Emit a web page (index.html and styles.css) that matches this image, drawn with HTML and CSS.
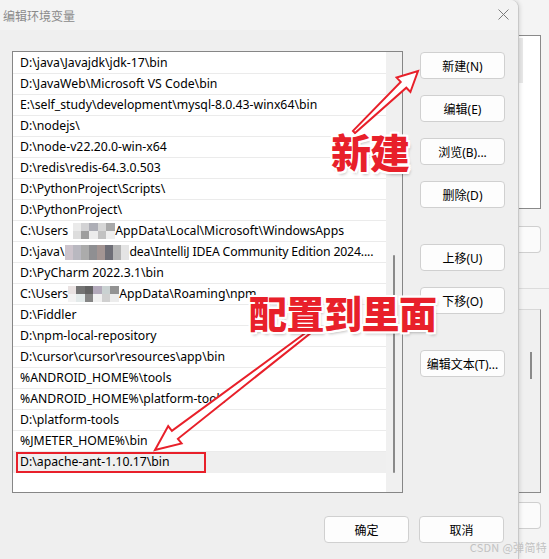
FILE: index.html
```html
<!DOCTYPE html>
<html lang="zh-CN">
<head>
<meta charset="utf-8">
<title>编辑环境变量</title>
<link rel="stylesheet" href="styles.css">
</head>
<body>
<div class="desk">
  <div class="dialog">
    <div class="titlebar">
      <span class="title">编辑环境变量</span>
      <svg class="close" width="11" height="11" viewBox="0 0 11 11"><path d="M0.5 0.5 L10.5 10.5 M10.5 0.5 L0.5 10.5" stroke="#7a7a7a" stroke-width="1" fill="none"/></svg>
    </div>
    <div class="body">
      <div class="list">
        <div class="rows">
          <div class="row">D:\java\Javajdk\jdk-17\bin</div>
          <div class="row">D:\JavaWeb\Microsoft VS Code\bin</div>
          <div class="row">E:\self_study\development\mysql-8.0.43-winx64\bin</div>
          <div class="row">D:\nodejs\</div>
          <div class="row">D:\node-v22.20.0-win-x64</div>
          <div class="row">D:\redis\redis-64.3.0.503</div>
          <div class="row">D:\PythonProject\Scripts\</div>
          <div class="row">D:\PythonProject\</div>
          <div class="row">C:\Users<svg class="mosaic m-a" width="42" height="16" viewBox="0 0 42 16"><rect x="0" y="0" width="8" height="8" fill="#eaeaea"/><rect x="8" y="0" width="8" height="8" fill="#d2d2d4"/><rect x="16" y="0" width="9" height="8" fill="#adaeb6"/><rect x="25" y="0" width="8" height="8" fill="#d6d6d6"/><rect x="33" y="0" width="9" height="8" fill="#a9a9a9"/><rect x="0" y="8" width="8" height="8" fill="#dddddd"/><rect x="8" y="8" width="8" height="8" fill="#9e9e9e"/><rect x="16" y="8" width="9" height="8" fill="#ececec"/><rect x="25" y="8" width="8" height="8" fill="#c2c2c2"/><rect x="33" y="8" width="9" height="8" fill="#efefef"/></svg>AppData\Local\Microsoft\WindowsApps</div>
          <div class="row">D:\java\<svg class="mosaic m-b" width="64" height="15" viewBox="0 0 64 15"><rect x="0" y="0" width="8" height="15" fill="#cdc4cc"/><rect x="8" y="0" width="8" height="15" fill="#b9b8c0"/><rect x="16" y="0" width="8" height="15" fill="#ababab"/><rect x="24" y="0" width="8" height="15" fill="#8f8f92"/><rect x="32" y="0" width="8" height="15" fill="#a39593"/><rect x="40" y="0" width="8" height="15" fill="#6f6f77"/><rect x="48" y="0" width="8" height="15" fill="#b4b4b4"/><rect x="56" y="0" width="8" height="15" fill="#e4e4e4"/></svg><span class="tight">dea\IntelliJ IDEA Community Edition 2024....</span></div>
          <div class="row">D:\PyCharm 2022.3.1\bin</div>
          <div class="row">C:\Users<svg class="mosaic m-c" width="51" height="16" viewBox="0 0 51 16"><rect x="0" y="0" width="8" height="8" fill="#e9e2e2"/><rect x="8" y="0" width="9" height="8" fill="#747474"/><rect x="17" y="0" width="8" height="8" fill="#636363"/><rect x="25" y="0" width="9" height="8" fill="#b3aabb"/><rect x="34" y="0" width="8" height="8" fill="#cad2d2"/><rect x="42" y="0" width="9" height="8" fill="#939393"/><rect x="0" y="8" width="8" height="8" fill="#f3f3f3"/><rect x="8" y="8" width="9" height="8" fill="#e3eaea"/><rect x="17" y="8" width="8" height="8" fill="#858585"/><rect x="25" y="8" width="9" height="8" fill="#f1f1f1"/><rect x="34" y="8" width="8" height="8" fill="#d0d0d0"/><rect x="42" y="8" width="9" height="8" fill="#ececec"/></svg>AppData\Roaming\npm</div>
          <div class="row">D:\Fiddler</div>
          <div class="row">D:\npm-local-repository</div>
          <div class="row">D:\cursor\cursor\resources\app\bin</div>
          <div class="row">%ANDROID_HOME%\tools</div>
          <div class="row">%ANDROID_HOME%\platform-tools</div>
          <div class="row">D:\platform-tools</div>
          <div class="row">%JMETER_HOME%\bin</div>
          <div class="row selected">D:\apache-ant-1.10.17\bin</div>
        </div>
        <div class="scroll"><div class="thumb"></div></div>
      </div>
      <div class="buttons">
        <div class="btn">新建(N)</div>
        <div class="btn gap-s">编辑(E)</div>
        <div class="btn gap-s">浏览(B)...</div>
        <div class="btn gap-s">删除(D)</div>
        <div class="btn gap-l">上移(U)</div>
        <div class="btn gap-s">下移(O)</div>
        <div class="btn gap-l">编辑文本(T)...</div>
      </div>
    </div>
    <div class="footer">
      <div class="btn">确定</div>
      <div class="btn">取消</div>
    </div>
  </div>
  <div class="backwin">
    <div class="bw-panel"><div class="bw-strip"></div></div>
    <div class="bw-btn"></div>
    <div class="bw-rule"></div>
    <div class="bw-panel2"><div class="bw-thumb"></div></div>
    <div class="bw-btn bw-btn2"></div>
  </div>
</div>

<svg class="arrows" width="549" height="559" viewBox="0 0 549 559">
  <polygon points="353.0,130.9 400.7,81.9 396.6,77.6 418,71 410.4,92.0 406.3,87.7 355.0,133.1" fill="#ffffff" stroke="#e8202a" stroke-width="2" stroke-linejoin="miter"/>
  <polygon points="311.1,328.8 171.9,430.8 168.2,426.1 155,450 181.6,443.5 177.9,438.8 312.9,331.2" fill="#ffffff" stroke="#e8202a" stroke-width="2" stroke-linejoin="miter"/>
</svg>
<div class="label label-new">新建</div>
<div class="label label-here">配置到里面</div>
<div class="mark-box"></div>
<div class="watermark">CSDN @弹简特</div>
</body>
</html>
```

FILE: styles.css
```css
* { box-sizing: border-box; }
html, body { margin: 0; padding: 0; }
body {
  width: 549px;
  height: 559px;
  overflow: hidden;
  position: relative;
  background: #f3f3f3;
  font-family: "Noto Sans", "Noto Sans CJK SC", sans-serif;
  color: #000;
}
.desk { display: flex; height: 559px; }

.dialog {
  flex: none;
  width: 519px;
  height: 559px;
  background: #efefef;
  border-right: 1px solid #c8c8c8;
  border-top-right-radius: 8px;
  box-shadow: 1px 0 4px rgba(0,0,0,0.12);
  display: flex;
  flex-direction: column;
  position: relative;
  z-index: 1;
}
.titlebar {
  height: 30px;
  background: #f3f3f3;
  border-top-right-radius: 8px;
  display: flex;
  align-items: center;
  justify-content: space-between;
  padding: 0 9px 0 3px;
  font-family: "Noto Sans CJK SC", sans-serif;
  font-size: 12px;
  color: #8a8a8a;
}
.close { display: block; margin-top: -1px; }

.body { display: flex; padding: 21px 0 0 12px; }
.list {
  width: 391px;
  height: 442px;
  border: 1px solid #868686;
  background: #fff;
  display: flex;
}
.rows { width: 373px; padding-top: 1px; }
.row {
  height: 21px;
  border-bottom: 1px solid #ebebeb;
  padding-left: 7px;
  font-size: 12.25px;
  line-height: 20px;
  white-space: nowrap;
  overflow: hidden;
  display: flex;
  align-items: center;
}
.row.selected { background: #efefef; border-bottom-color: #efefef; }
.tight { letter-spacing: -0.15px; }
.mosaic { flex: none; display: block; }
.m-a { margin: 0 0 0 5px; }
.m-b { margin: 0 0 0 1px; }
.m-c { margin: 0 0 0 0; }

.scroll { width: 16px; background: #f0f0f0; }
.thumb {
  margin: 203px 0 0 7px;
  width: 2px;
  height: 218px;
  background: #8a8a8a;
  border-radius: 1px;
}

.buttons {
  margin-left: 17px;
  padding-top: 1px;
  display: flex;
  flex-direction: column;
}
.btn {
  width: 85px;
  height: 27px;
  border: 1px solid #d0d0d0;
  border-radius: 4px;
  background: #fdfdfd;
  font-family: "Noto Sans", "Noto Sans CJK SC", sans-serif;
  font-size: 12px;
  display: flex;
  align-items: center;
  justify-content: center;
  color: #000;
}
.gap-s { margin-top: 16px; }
.gap-l { margin-top: 36px; }

.footer {
  display: flex;
  justify-content: flex-end;
  gap: 10px;
  padding: 23px 14px 0 0;
}

/* background window peeking out on the right */
.backwin {
  flex: 1;
  background: #f4f4f4;
  padding-top: 35px;
}
.bw-panel {
  width: 22px;
  height: 174px;
  background: #fff;
  border: 1px solid #8a8a8a;
  border-left: none;
}
.bw-strip { width: 4px; height: 45px; margin-top: 2px; background: #e9e9e9; }
.bw-btn {
  width: 22px;
  height: 27px;
  margin-top: 17px;
  background: #fbfbfb;
  border: 1px solid #cfcfcf;
  border-left: none;
  border-radius: 0 4px 4px 0;
}
.bw-rule { height: 1px; margin-top: 35px; background: #dcdcdc; }
.bw-panel2 {
  width: 22px;
  height: 184px;
  margin-top: 20px;
  background: #f0f0f0;
  border: 1px solid #8a8a8a;
  border-left: none;
  border-top-color: #d8d8d8;
  padding-top: 42px;
}
.bw-thumb { width: 2px; height: 27px; margin-left: 11px; background: #8a8a8a; }
.bw-btn2 { margin-top: 9px; }

/* annotations layered on top */
.arrows { position: absolute; left: 0; top: 0; z-index: 5; }
.label {
  position: absolute;
  z-index: 6;
  font-family: "Noto Sans CJK SC", sans-serif;
  font-weight: 900;
  color: #e8202a;
  line-height: 1;
  white-space: nowrap;
  text-shadow:
    -2px 0 0 #fff, 2px 0 0 #fff, 0 -2px 0 #fff, 0 2px 0 #fff,
    -2px -2px 0 #fff, 2px 2px 0 #fff, -2px 2px 0 #fff, 2px -2px 0 #fff,
    2px 3px 3px rgba(0,0,0,0.25);
}
.label-new { left: 331px; top: 131px; font-size: 40px; letter-spacing: -1px; }
.label-here { left: 249px; top: 293px; font-size: 38px; letter-spacing: -0.5px; }
.mark-box {
  position: absolute;
  z-index: 6;
  left: 16px;
  top: 452px;
  width: 190px;
  height: 21px;
  border: 2px solid #e8202a;
}
.watermark {
  position: absolute;
  z-index: 7;
  right: 2px;
  bottom: 4px;
  font-family: "Noto Sans CJK SC", sans-serif;
  font-size: 11px;
  color: #c2c2c2;
  letter-spacing: 0.3px;
}
```
